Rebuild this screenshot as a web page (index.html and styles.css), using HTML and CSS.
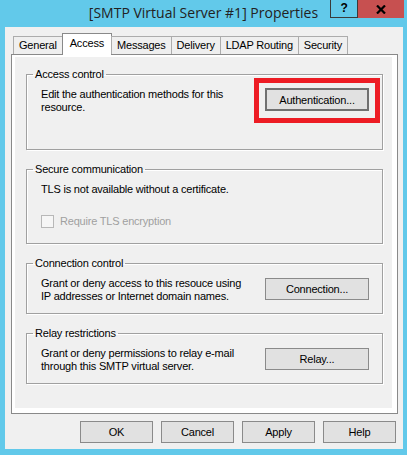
FILE: index.html
```html
<!DOCTYPE html>
<html lang="en">
<head>
    <meta charset="UTF-8">
    <meta name="viewport" content="width=device-width, initial-scale=1.0">
    <title>[SMTP Virtual Server #1] Properties</title>
    <link rel="stylesheet" href="styles.css">
</head>
<body>

    <div class="window">
        <div class="titlebar">
            <div class="title">[SMTP Virtual Server #1] Properties</div>
            <div class="caption">
                <span class="cap-help">?</span>
                <span class="cap-close">
                    <svg width="10" height="9" viewBox="0 0 10 9">
                        <path d="M1 0.5 L9 8.5 M9 0.5 L1 8.5" stroke="#000" stroke-width="2.2"/>
                    </svg>
                </span>
            </div>
        </div>

        <div class="client">
            <div class="tabs">
                <div class="tab">General</div>
                <div class="tab active">Access</div>
                <div class="tab">Messages</div>
                <div class="tab">Delivery</div>
                <div class="tab">LDAP Routing</div>
                <div class="tab">Security</div>
            </div>

            <div class="panel">
                <div class="page">
                    <fieldset class="group g-access">
                        <legend>Access control</legend>
                        <div class="row">
                            <p>Edit the authentication methods for this<br>resource.</p>
                            <span class="highlight">
                                <button class="btn default">Authentication...</button>
                            </span>
                        </div>
                    </fieldset>

                    <fieldset class="group g-secure">
                        <legend>Secure communication</legend>
                        <p>TLS is not available without a certificate.</p>
                        <label class="check disabled">
                            <span class="box"></span>
                            Require TLS encryption
                        </label>
                    </fieldset>

                    <fieldset class="group g-conn">
                        <legend>Connection control</legend>
                        <div class="row">
                            <p>Grant or deny access to this resouce using<br>IP addresses or Internet domain names.</p>
                            <button class="btn">Connection...</button>
                        </div>
                    </fieldset>

                    <fieldset class="group g-relay">
                        <legend>Relay restrictions</legend>
                        <div class="row">
                            <p>Grant or deny permissions to relay e-mail<br>through this SMTP virtual server.</p>
                            <button class="btn">Relay...</button>
                        </div>
                    </fieldset>
                </div>
            </div>

            <div class="actions">
                <button class="btn small">OK</button>
                <button class="btn small">Cancel</button>
                <button class="btn small">Apply</button>
                <button class="btn small">Help</button>
            </div>
        </div>
    </div>

</body>
</html>
```

FILE: styles.css
```css
body {
    margin: 0;
    background: #62c9ea;
    font-family: 'Liberation Sans', Arial, sans-serif;
    font-size: 11px;
    letter-spacing: -0.2px;
    color: #000;
}
.window {
    width: 407px;
    height: 455px;
    display: flex;
    flex-direction: column;
}
.titlebar {
    height: 27px;
    display: grid;
    grid-template-columns: 1fr auto 1fr;
}
.title {
    grid-column: 2;
    font-family: 'Open Sans', sans-serif;
    font-size: 14px;
    letter-spacing: 0;
    line-height: 25px;
    color: #222;
    white-space: nowrap;
}
.caption {
    grid-column: 3;
    justify-self: end;
    align-self: start;
    display: flex;
    margin-right: 3px;
}
.cap-help {
    width: 28px;
    height: 18px;
    box-sizing: border-box;
    border: 1px solid #3a3a3a;
    border-top: 0;
    font-weight: bold;
    font-size: 12px;
    line-height: 16px;
    text-align: center;
}
.cap-close {
    width: 46px;
    height: 18px;
    background: #c75050;
    display: flex;
    justify-content: center;
    align-items: center;
}
.client {
    flex: 1;
    margin: 0 4px 6px 5px;
    background: #f0f0f0;
    padding: 6px 5px 0 6px;
}
.tabs {
    display: flex;
    align-items: flex-end;
    padding-left: 3px;
    margin-bottom: -1px;
    position: relative;
    z-index: 1;
}
.tab {
    height: 18px;
    box-sizing: border-box;
    border: 1px solid #acacac;
    border-bottom: 0;
    margin-bottom: 1px;
    margin-left: -1px;
    padding: 0 5px;
    line-height: 17px;
    background: #efefef;
}
.tab.active {
    height: 22px;
    margin-bottom: 0;
    background: #fff;
    border-color: #898989;
    line-height: 18px;
    padding: 0 7px;
}
.panel {
    height: 360px;
    box-sizing: border-box;
    border: 1px solid #898989;
    background: #fff;
    padding: 2px 5px 5px 3px;
}
.page {
    height: 100%;
    background: #f0f0f0;
    padding-top: 11px;
    box-sizing: border-box;
}
.group {
    margin: 13px 9px 0 11px;
    padding: 7px 13px 10px 14px;
    border: 1px solid #a0a0a0;
    box-shadow: 1px 1px 0 #fff, inset 1px 1px 0 #fff;
    min-inline-size: 0;
}
.group legend {
    margin-left: -8px;
    padding: 0 2px;
    line-height: 13px;
}
.g-access {
    margin-top: 0;
    padding-bottom: 35px;
}
.g-secure {
    padding-bottom: 15px;
}
p {
    margin: 0;
    line-height: 13px;
}
.row {
    display: flex;
    justify-content: space-between;
    align-items: flex-start;
}
.row .btn {
    margin-top: 1px;
}
.btn {
    width: 104px;
    height: 22px;
    box-sizing: border-box;
    border: 1px solid #8a8a8a;
    background: #e1e1e1;
    font-family: 'Liberation Sans', Arial, sans-serif;
    font-size: 11px;
    letter-spacing: -0.2px;
    color: #000;
    padding: 0;
}
.highlight {
    display: flex;
    border: 5px solid #ed1c24;
    padding: 5px 6px 7px 6px;
    margin: -10px -11px -12px 0;
}
.row .highlight .btn.default {
    margin-top: 0;
    height: 23px;
    border: 2px solid #707070;
}
.check {
    display: flex;
    align-items: center;
    gap: 6px;
    margin-top: 19px;
    line-height: 13px;
}
.check .box {
    width: 13px;
    height: 13px;
    box-sizing: border-box;
    border: 1px solid #b8b8b8;
    background: #f6f6f6;
}
.check.disabled {
    color: #a0a0a0;
}
.actions {
    display: flex;
    justify-content: flex-end;
    gap: 8px;
    margin-top: 7px;
    padding-right: 2px;
}
.btn.small {
    width: 73px;
}
```
